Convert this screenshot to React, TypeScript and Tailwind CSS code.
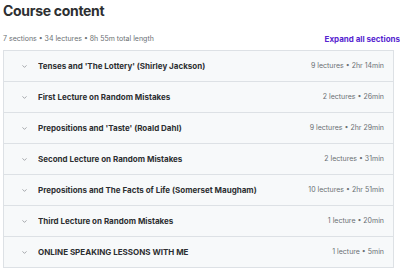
import { ChevronDown } from 'lucide-react'

const sections = [
  { title: "Tenses and 'The Lottery' (Shirley Jackson)", meta: '9 lectures • 2hr 14min' },
  { title: 'First Lecture on Random Mistakes', meta: '2 lectures • 26min' },
  { title: "Prepositions and 'Taste' (Roald Dahl)", meta: '9 lectures • 2hr 29min' },
  { title: 'Second Lecture on Random Mistakes', meta: '2 lectures • 31min' },
  { title: 'Prepositions and The Facts of Life (Somerset Maugham)', meta: '10 lectures • 2hr 51min' },
  { title: 'Third Lecture on Random Mistakes', meta: '1 lecture • 20min' },
  { title: 'ONLINE SPEAKING LESSONS WITH ME', meta: '1 lecture • 5min' },
]

export default function App() {
  return (
    <div className="w-[400px] h-[270px] overflow-hidden bg-white pl-[3px] font-['Inter',sans-serif] text-[#2d2f31]">
      <h2 className="pt-[1px] text-[14px] leading-[20px] font-bold tracking-[-0.3px]">Course content</h2>
      <div className="mt-[11px] flex items-center justify-between h-[14px]">
        <span className="text-[7px] text-[#6a6f73]">7 sections • 34 lectures • 8h 55m total length</span>
        <span className="text-[8px] font-bold text-[#5624d0]">Expand all sections</span>
      </div>
      <div className="mt-[4px] w-[391px] border border-[#dde1e5] border-b-0">
        {sections.map((s) => (
          <div
            key={s.title}
            className="flex h-[31px] items-center border-b border-[#dde1e5] bg-[#f7f9fa] pl-[17px] pr-[9px]"
          >
            <ChevronDown className="h-[7px] w-[7px] text-[#6a6f73]" strokeWidth={2} />
            <span className="ml-[10px] flex-1 truncate text-[8px] font-bold">{s.title}</span>
            <span className="ml-2 text-[7px] text-[#6a6f73]">{s.meta}</span>
          </div>
        ))}
      </div>
    </div>
  )
}
